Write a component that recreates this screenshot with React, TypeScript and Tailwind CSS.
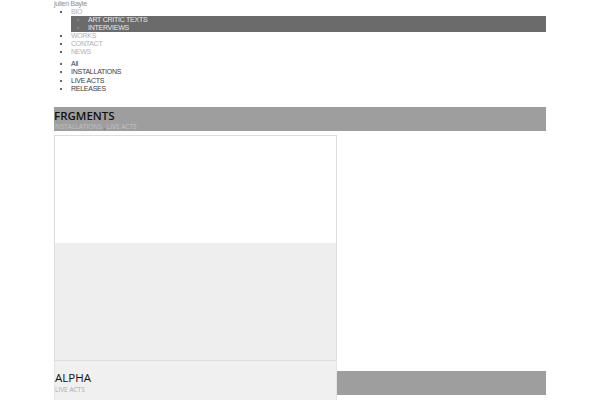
import React from 'react';

const menu = ['WORKS', 'CONTACT', 'NEWS'];
const filters = ['All', 'INSTALLATIONS', 'LIVE ACTS', 'RELEASES'];

export default function App() {
  return (
    <div className="w-[600px] h-[400px] overflow-hidden bg-white font-['Liberation_Sans',Arial,sans-serif]">
      <div className="mx-[54px] text-[7px] leading-[8px] tracking-[-0.25px]">
        {/* site name */}
        <div className="text-[#8c8c8c]">julien Bayle</div>

        {/* main menu */}
        <ul className="list-disc pl-[17px] text-[#b0b0b0] marker:text-[#333]">
          <li>BIO</li>
          <ul className="list-[circle] pl-[17px] bg-[#6b6b6b] text-[#e8e8e8] marker:text-[#888]">
            <li>ART CRITIC TEXTS</li>
            <li>INTERVIEWS</li>
          </ul>
          {menu.map((m) => (
            <li key={m}>{m}</li>
          ))}
        </ul>

        {/* filter */}
        <ul className="list-disc pl-[17px] mt-[4px] text-[#3a3a3a] leading-[8.4px]">
          {filters.map((f) => (
            <li key={f}>{f}</li>
          ))}
        </ul>

        {/* project: FRGMENTS */}
        <div className="mt-[13px] h-[24px] bg-[#9e9e9e] font-['Open_Sans',sans-serif] tracking-normal">
          <div className="text-[11.5px] leading-[15px] pt-[1px] text-[#111] font-semibold">FRGMENTS</div>
          <div className="text-[6.5px] leading-[8px] text-[#c4c4c4]">
            INSTALLATIONS <span className="text-[#444]">,</span> LIVE ACTS
          </div>
        </div>
        <div className="mt-[4px] w-[283px] border border-[#dddddd] flex flex-col">
          <div className="h-[107px] bg-white" />
          <div className="h-[117px] bg-[#eeeeee]" />
        </div>

        {/* project: ALPHA */}
        <div className="flex tracking-normal">
          <div className="w-[283px] h-[40px] bg-[#f0f0f0] border-x border-[#e4e4e4] font-['Open_Sans',sans-serif] pt-[9px]">
            <div className="text-[11.5px] leading-[15px] text-[#111] font-medium">ALPHA</div>
            <div className="text-[6.5px] leading-[10px] text-[#aaa]">LIVE ACTS</div>
          </div>
          <div className="flex-1 mt-[10px] h-[24px] bg-[#9e9e9e]" />
        </div>
      </div>
    </div>
  );
}
